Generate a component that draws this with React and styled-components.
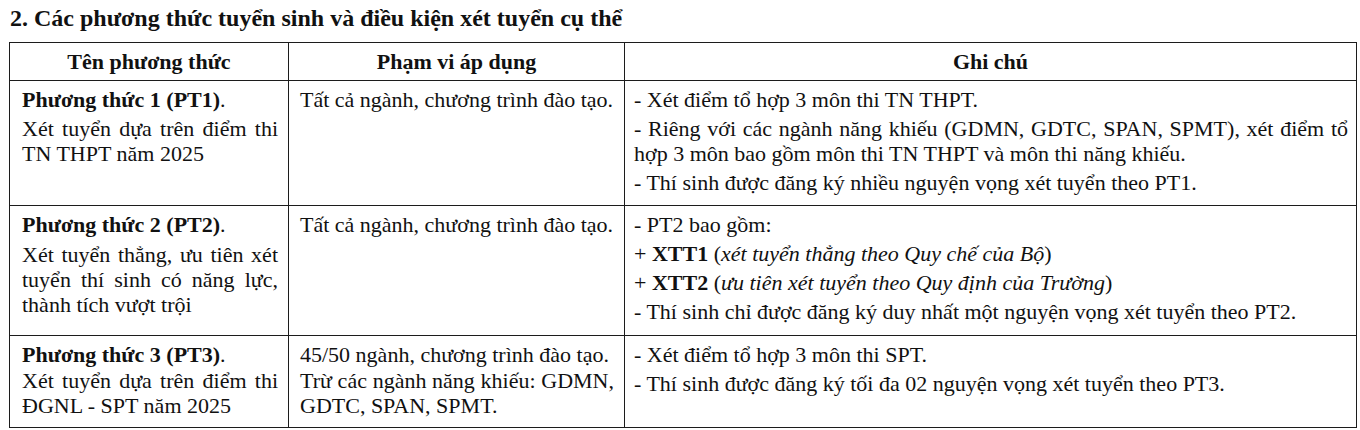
import React from 'react'
import styled, { createGlobalStyle } from 'styled-components'

const serif = `"Liberation Serif", "Times New Roman", serif`

const GlobalStyle = createGlobalStyle`
  html, body {
    margin: 0;
    padding: 0;
    background: #fff;
  }
  body {
    font-family: ${serif};
    color: #111;
  }
`

const Page = styled.div`
  padding: 4px 5px 0 9px;
  width: 1360px;
  box-sizing: border-box;
`

const Title = styled.h2`
  margin: 0 0 10px 1px;
  font-size: 24px;
  line-height: 28px;
  font-weight: bold;
`

const Table = styled.table`
  width: 1347px;
  border-collapse: collapse;
  table-layout: fixed;
  font-family: ${serif};
  font-size: 22px;
  line-height: 25px;
`

const HeadCell = styled.th`
  height: 37px;
  padding: 0 10px;
  border: 1px solid #1c1c1c;
  font-weight: bold;
  text-align: center;
  vertical-align: middle;
`

const Row = styled.tr`
  height: ${(p) => p.$h}px;
`

const Cell = styled.td`
  padding: 6px ${(p) => p.$pr || 10}px 0 ${(p) => p.$pl || 11}px;
  border: 1px solid #1c1c1c;
  vertical-align: top;
  text-align: justify;
`

const Para = styled.p`
  margin: 0 0 ${(p) => p.$gap ?? 4}px;
`

const Strong = styled.b`
  font-weight: bold;
`

const Note = styled.i`
  font-style: italic;
`

const rows = [
  {
    h: 125,
    gap: 4,
    name: ['Phương thức 1 (PT1)', 'Xét tuyển dựa trên điểm thi TN THPT năm 2025'],
    scope: ['Tất cả ngành, chương trình đào tạo.'],
    notes: [
      '- Xét điểm tổ hợp 3 môn thi TN THPT.',
      '- Riêng với các ngành năng khiếu (GDMN, GDTC, SPAN, SPMT), xét điểm tổ hợp 3 môn bao gồm môn thi TN THPT và môn thi năng khiếu.',
      '- Thí sinh được đăng ký nhiều nguyện vọng xét tuyển theo PT1.',
    ],
  },
  {
    h: 130,
    gap: 5,
    name: ['Phương thức 2 (PT2)', 'Xét tuyển thẳng, ưu tiên xét tuyển thí sinh có năng lực, thành tích vượt trội'],
    scope: ['Tất cả ngành, chương trình đào tạo.'],
    notes: [
      '- PT2 bao gồm:',
      <>+ <Strong>XTT1</Strong> (<Note>xét tuyển thẳng theo Quy chế của Bộ</Note>)</>,
      <>+ <Strong>XTT2</Strong> (<Note>ưu tiên xét tuyển theo Quy định của Trường</Note>)</>,
      '- Thí sinh chỉ được đăng ký duy nhất một nguyện vọng xét tuyển theo PT2.',
    ],
  },
  {
    h: 92,
    gap: 1,
    name: ['Phương thức 3 (PT3)', 'Xét tuyển dựa trên điểm thi ĐGNL - SPT năm 2025'],
    scope: ['45/50 ngành, chương trình đào tạo.', 'Trừ các ngành năng khiếu: GDMN, GDTC, SPAN, SPMT.'],
    notes: [
      '- Xét điểm tổ hợp 3 môn thi SPT.',
      '- Thí sinh được đăng ký tối đa 02 nguyện vọng xét tuyển theo PT3.',
    ],
  },
]

export default function App() {
  return (
    <Page>
      <GlobalStyle />
      <Title>2. Các phương thức tuyển sinh và điều kiện xét tuyển cụ thể</Title>
      <Table>
        <colgroup>
          <col style={{ width: 279 }} />
          <col style={{ width: 336 }} />
          <col style={{ width: 732 }} />
        </colgroup>
        <thead>
          <tr>
            <HeadCell>Tên phương thức</HeadCell>
            <HeadCell>Phạm vi áp dụng</HeadCell>
            <HeadCell>Ghi chú</HeadCell>
          </tr>
        </thead>
        <tbody>
          {rows.map((r) => (
            <Row key={r.name[0]} $h={r.h}>
              <Cell $pl={12}>
                <Para $gap={r.gap}>
                  <Strong>{r.name[0]}</Strong>.
                </Para>
                <Para>{r.name[1]}</Para>
              </Cell>
              <Cell>
                {r.scope.map((s, i) => (
                  <Para key={i} $gap={1}>{s}</Para>
                ))}
              </Cell>
              <Cell $pl={9} $pr={8}>
                {r.notes.map((n, i) => (
                  <Para key={i}>{n}</Para>
                ))}
              </Cell>
            </Row>
          ))}
        </tbody>
      </Table>
    </Page>
  )
}
